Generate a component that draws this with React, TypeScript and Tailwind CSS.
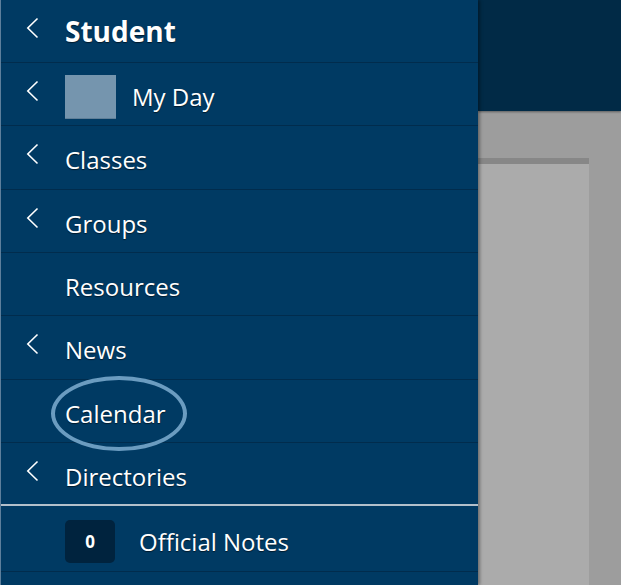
import React from 'react';

const font = { fontFamily: '"Open Sans", "Noto Sans", Arial, sans-serif' };

function Chevron({ lift }: { lift: string }) {
  return (
    <svg width="13" height="22" viewBox="0 0 13 22" className={lift} fill="none">
      <polyline points="11.5,1.5 1.8,11 11.5,20.5" stroke="#ffffff" strokeWidth="1.6" strokeLinejoin="miter" />
    </svg>
  );
}

interface RowProps {
  label: string;
  chevron?: boolean;
  lead?: React.ReactNode;
  bold?: boolean;
  className?: string;
  circled?: boolean;
}

function Row({ label, chevron, lead, bold, className = 'h-[63.33px] border-b border-[#012c4d]', circled }: RowProps) {
  return (
    <div className={`flex items-center ${bold ? 'pt-0' : 'pt-[6px]'} ${className}`}>
      <div className="flex w-[64px] shrink-0 items-center pl-[25px]">
        {chevron && <Chevron lift={bold ? '-translate-y-[3px]' : '-translate-y-[6px]'} />}
      </div>
      {lead}
      <span
        className={`relative text-white [text-shadow:0_1px_1px_rgba(0,0,0,0.55)] ${
          bold ? 'text-[28px] font-bold' : 'text-[24px]'
        }`}
      >
        {label}
        {circled && (
          <span className="pointer-events-none absolute -left-[14px] -right-[21px] -top-[20px] -bottom-[19px] rounded-[50%] border-4 border-[#6b9cc0]" />
        )}
      </span>
    </div>
  );
}

export default function App() {
  return (
    <div className="flex h-[585px] w-[621px] overflow-hidden bg-[#9d9d9d]" style={font}>
      <aside className="relative z-10 flex w-[478px] shrink-0 flex-col border-l border-[#5d7f9c] bg-[#003a63] shadow-[2px_0_3px_rgba(0,0,0,0.35)]">
        <Row label="Student" chevron bold className="h-[63px] border-b border-[#012c4d]" />
        <Row
          label="My Day"
          chevron
          lead={<div className="mr-[16px] h-[44px] w-[51px] shrink-0 border-b border-[#5f7f98] bg-[#7595ae]" />}
        />
        <Row label="Classes" chevron />
        <Row label="Groups" chevron />
        <Row label="Resources" />
        <Row label="News" chevron />
        <Row label="Calendar" circled />
        <Row label="Directories" chevron className="h-[63.33px] border-b-2 border-[#b3c0cb]" />
        <Row
          label="Official Notes"
          className="h-[66px] border-b border-[#012c4d]"
          lead={
            <div className="mr-[24px] flex h-[43px] w-[50px] shrink-0 items-center justify-center rounded-[5px] bg-[#00233e] text-[17px] font-bold text-white">
              0
            </div>
          }
        />
        <div className="flex-1" />
      </aside>
      <div className="flex min-w-0 flex-1 flex-col">
        <div className="h-[111px] shrink-0 bg-[#012a46] shadow-[0_1px_2px_rgba(0,0,0,0.4)]" />
        <div className="flex flex-1 flex-col pr-[32px] pt-[47px]">
          <div className="flex-1 border-t-[6px] border-[#878787] bg-[#ababab]" />
        </div>
      </div>
    </div>
  );
}
